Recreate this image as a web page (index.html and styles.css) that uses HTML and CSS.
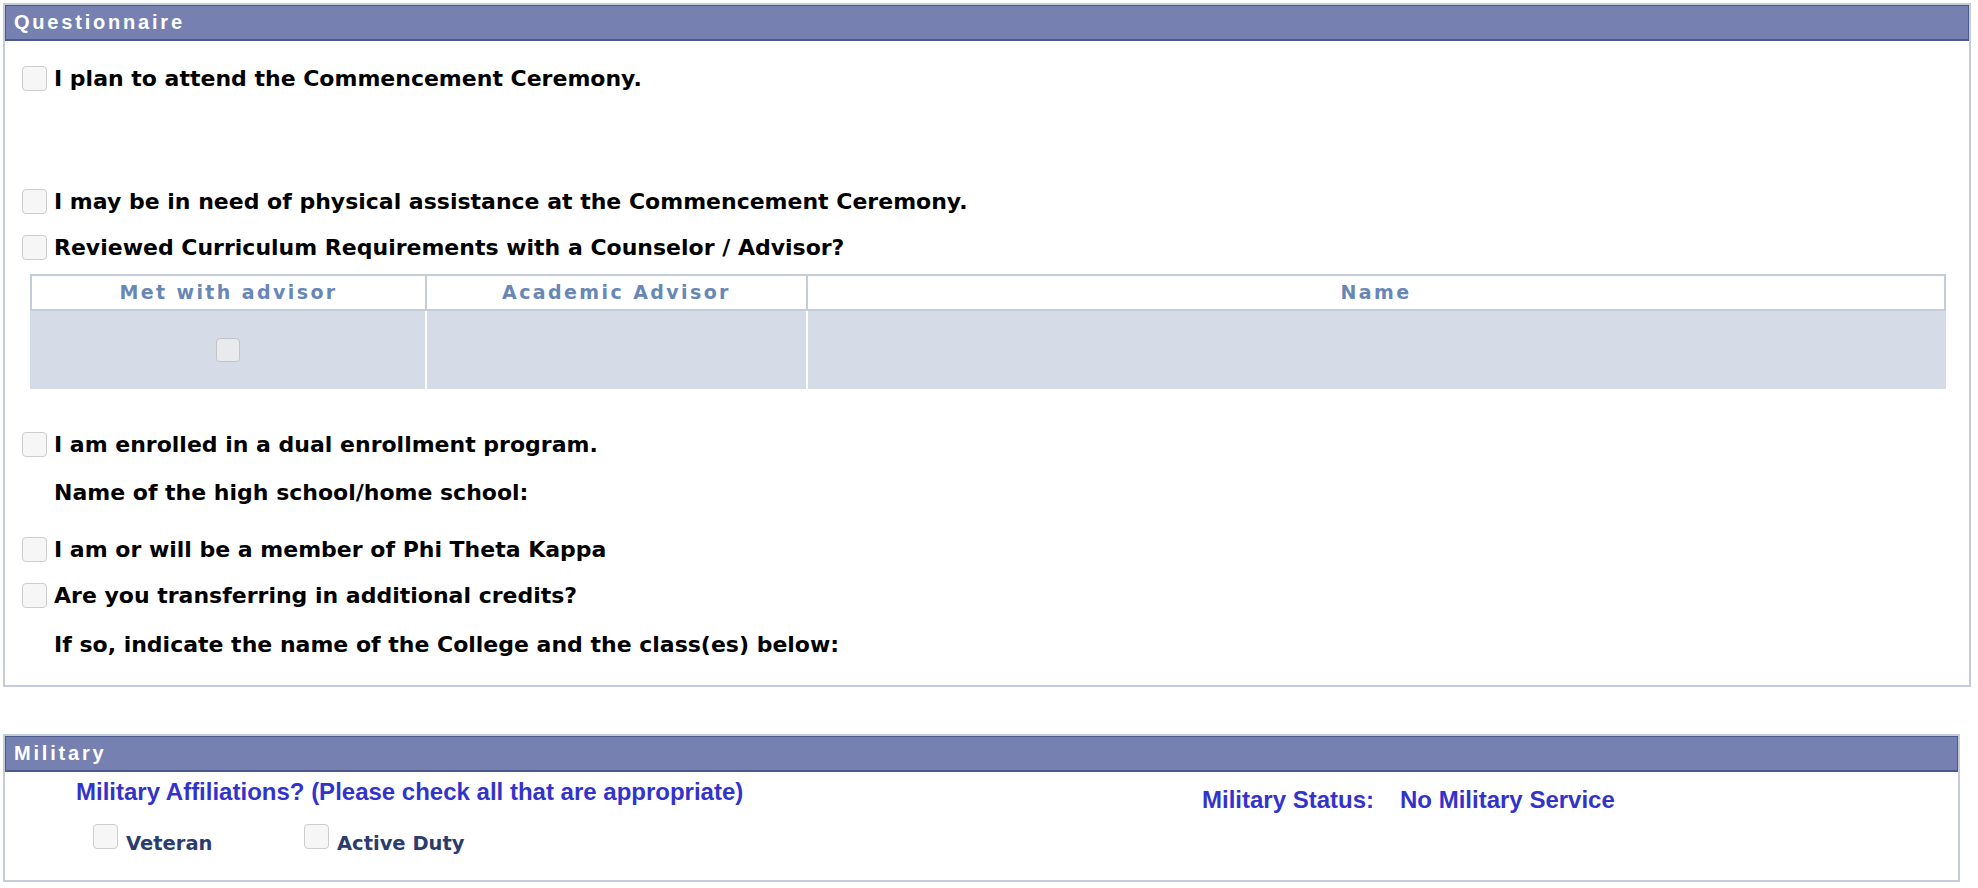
FILE: index.html
```html
<!DOCTYPE html>
<html lang="en">
    <head>
        <meta name="viewport" content="width=device-width, initial-scale=1.0">
        <title>Questionnaire</title>
        <link rel="stylesheet" href="styles.css">
    </head>
    <body>
        <div class="panel quest">
            <div class="hdr">Questionnaire</div>
            <div class="qbody">
                <label class="row"><input type="checkbox" class="cb">I plan to attend the Commencement Ceremony.</label>
                <label class="row r2"><input type="checkbox" class="cb">I may be in need of physical assistance at the Commencement Ceremony.</label>
                <label class="row"><input type="checkbox" class="cb">Reviewed Curriculum Requirements with a Counselor / Advisor?</label>
                <div class="adv">
                    <div class="th">Met with advisor</div>
                    <div class="th">Academic Advisor</div>
                    <div class="th last">Name</div>
                    <div class="td first"><input type="checkbox" class="cb small"></div>
                    <div class="td"></div>
                    <div class="td"></div>
                </div>
                <label class="row r4"><input type="checkbox" class="cb">I am enrolled in a dual enrollment program.</label>
                <div class="row txt r5">Name of the high school/home school:</div>
                <label class="row r6"><input type="checkbox" class="cb">I am or will be a member of Phi Theta Kappa</label>
                <label class="row"><input type="checkbox" class="cb">Are you transferring in additional credits?</label>
                <div class="row txt r8">If so, indicate the name of the College and the class(es) below:</div>
            </div>
        </div>

        <div class="panel mil">
            <div class="hdr">Military</div>
            <div class="mbody">
                <div class="mleft">
                    <div class="blue">Military Affiliations? (Please check all that are appropriate)</div>
                    <div class="opts">
                        <label class="opt"><input type="checkbox" class="cb"><span>Veteran</span></label>
                        <label class="opt"><input type="checkbox" class="cb"><span>Active Duty</span></label>
                    </div>
                </div>
                <div class="mright blue">
                    <span>Military Status:</span>
                    <span>No Military Service</span>
                </div>
            </div>
        </div>
    </body>
</html>
```

FILE: styles.css
```css
body {
    margin: 0;
    padding: 3px;
    background-color: white;
    font-family: "DejaVu Sans", Verdana, sans-serif;
    font-weight: bold;
}
.panel {
    border: 2px solid #c4cbd9;
    box-sizing: border-box;
}
.quest {
    width: 1968px;
}
.mil {
    width: 1957px;
    margin-top: 47px;
}
.hdr {
    background-color: #7681b1;
    border: 1px solid #4b5a8d;
    border-bottom-width: 2px;
    color: white;
    font-family: "Liberation Sans", Arial, sans-serif;
    font-size: 20px;
    letter-spacing: 2.8px;
    line-height: 33px;
    padding-left: 8px;
}
.qbody {
    padding: 14px 0 18px 17px;
}
.row {
    display: flex;
    align-items: center;
    gap: 7px;
    height: 46px;
    font-size: 22px;
    color: black;
}
.row.txt {
    padding-left: 32px;
}
.r2 {
    margin-top: 77px;
}
.r4 {
    margin-top: 32px;
}
.r5 {
    margin-top: 2px;
}
.r6 {
    margin-top: 11px;
}
.r8 {
    margin-top: 3px;
}
.cb {
    appearance: none;
    -webkit-appearance: none;
    margin: 0;
    width: 25px;
    height: 25px;
    flex: none;
    border: 1.5px solid #cdcdcd;
    border-radius: 4px;
    background-color: #f6f6f6;
    box-sizing: border-box;
}
.cb.small {
    width: 24px;
    height: 24px;
    background-color: #e9eaee;
    border-color: #c4c4c4;
}
.adv {
    display: grid;
    grid-template-columns: 395px 381px 1fr;
    margin: 4px 23px 0 8px;
}
.th {
    border: 2px solid #c4cbd9;
    border-right: none;
    height: 33px;
    line-height: 33px;
    text-align: center;
    color: #6887b7;
    font-size: 19px;
    letter-spacing: 2.4px;
    background-color: white;
}
.th.last {
    border-right: 2px solid #c4cbd9;
}
.td {
    background-color: #d5dce8;
    border-left: 2px solid white;
    height: 78px;
    display: flex;
    align-items: center;
    justify-content: center;
}
.td.first {
    border-left: none;
}
.mbody {
    display: flex;
    height: 108px;
}
.mleft {
    width: 1126px;
    padding: 6px 0 0 71px;
}
.blue {
    color: #3333cc;
    font-family: "Liberation Sans", Arial, sans-serif;
    font-size: 24px;
}
.opts {
    display: flex;
    margin-top: 18px;
    padding-left: 17px;
}
.opt {
    display: flex;
    align-items: flex-end;
    gap: 8px;
    width: 211px;
    color: #2c3c6d;
    font-size: 19.5px;
}
.opt span {
    line-height: 1;
    margin-bottom: -4px;
}
.mright {
    padding-top: 14px;
    display: flex;
    gap: 26px;
    align-items: flex-start;
}
```
